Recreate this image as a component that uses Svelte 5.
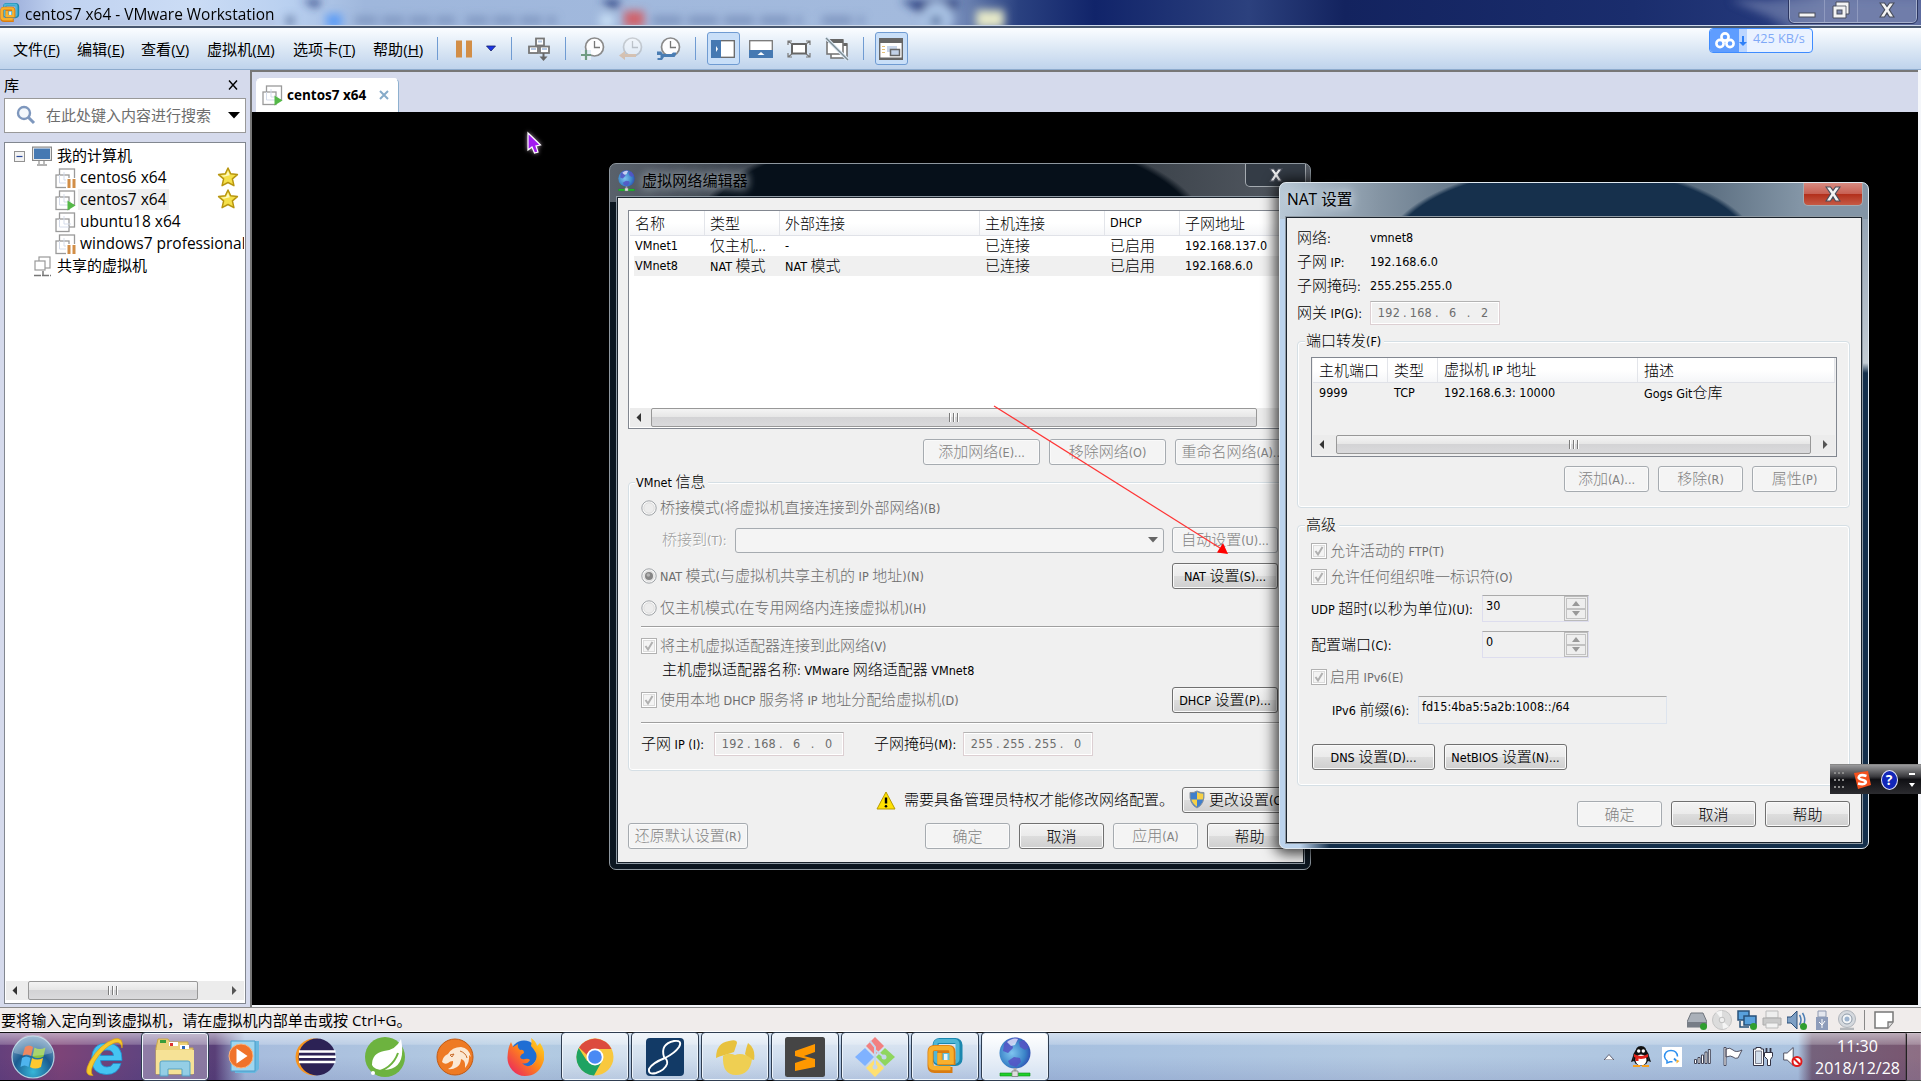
<script>
  // Splits a caption into CJK and Latin runs so each can use its own face and size.
  const runs = (t) => t.match(/[\u3000-\u9fff]+|[^\u3000-\u9fff]+/g) ?? [];
  const isCjk = (s) => /^[\u3000-\u9fff]/.test(s);

  const menus = [
    { t: '文件', k: 'F', w: 64 },
    { t: '编辑', k: 'E', w: 64 },
    { t: '查看', k: 'V', w: 66 },
    { t: '虚拟机', k: 'M', w: 86 },
    { t: '选项卡', k: 'T', w: 80 },
    { t: '帮助', k: 'H', w: 64 }
  ];
  const machines = [
    { name: 'centos6 x64', state: 'pause', star: true },
    { name: 'centos7 x64', state: 'play', star: true, selected: true },
    { name: 'ubuntu18 x64', state: 'off' },
    { name: 'windows7 professional', state: 'pause' }
  ];
  const nets = [
    ['名称', '类型', '外部连接', '主机连接', 'DHCP', '子网地址'],
    ['VMnet1', '仅主机...', '-', '已连接', '已启用', '192.168.137.0'],
    ['VMnet8', 'NAT 模式', 'NAT 模式', '已连接', '已启用', '192.168.6.0']
  ];
  const tasks = ['start', 'ie', 'folder', 'wmp', 'eclipse', 'spring', 'cheetah', 'firefox', 'chrome', 'eight', 'navi', 'sublime', 'git', 'vmware', 'globe'];
  const framed = ['folder', 'chrome', 'eight', 'navi', 'sublime', 'git', 'vmware', 'globe'];
</script>

{#snippet mix(t)}<span class="mix">{#each runs(t) as r}<span class:cjk={isCjk(r)}>{r}</span>{/each}</span>{/snippet}

{#snippet btn(t, cls)}<button class="btn {cls}">{@render mix(t)}</button>{/snippet}

{#snippet check(t)}
  <label class="opt"><svg width="16" height="16" viewBox="0 0 16 16"><rect x=".5" y=".5" width="15" height="15" fill="#fff" stroke="#b1b1b1"/><rect x="2.5" y="2.5" width="11" height="11" fill="#f4f4f4" stroke="#dcdcdc"/><path d="M4.5 8 L7 11.5 L11.5 4" fill="none" stroke="#b0b0b0" stroke-width="2"/></svg>{@render mix(t)}</label>
{/snippet}

{#snippet radio(t, on)}
  <label class="opt"><svg width="16" height="16" viewBox="0 0 16 16"><circle cx="8" cy="8" r="7.2" fill="#f7f7f7" stroke="#a0a4a8"/><circle cx="8" cy="8" r="5.2" fill="#ececec" stroke="#dedede"/>{#if on}<circle cx="8" cy="8" r="4" fill="#858585"/><circle cx="7.3" cy="7" r="1.8" fill="#b4b4b4"/>{/if}</svg>{@render mix(t)}</label>
{/snippet}

{#snippet hscroll(cls)}
  <div class="hs {cls}">
    <svg width="19" height="19" viewBox="0 0 19 19"><path d="M12 5v9L7.500 9.500z" fill="#333"/></svg>
    <div class="thumb"><i></i><i></i><i></i></div>
    <svg class="end" width="19" height="19" viewBox="0 0 19 19"><path d="M8 5v9l4.500-4.500z" fill="#555"/></svg>
  </div>
{/snippet}

{#snippet vm(state)}
  <svg width="21" height="21" viewBox="0 0 21 21"><rect x="4.500" y="1" width="15" height="14" fill="#fff" stroke="#9a9a9a" stroke-width="1.300"/><rect x="1" y="7" width="13" height="12.500" fill="#fff" stroke="#9a9a9a" stroke-width="1.300"/><path d="M4.500 7v8H14M9 4v8h7" fill="none" stroke="#d5dcea"/>
    {#if state === 'pause'}<path d="M11 10h10v11H11z" fill="#fff"/><path d="M12.500 11h3v9h-3zM17.500 11h3v9h-3z" fill="#d28e47"/>{/if}
    {#if state === 'play'}<path d="M12.500 10.500v10l8-5z" fill="#55b948"/>{/if}
  </svg>
{/snippet}

{#snippet star()}
  <svg class="star" width="22" height="20" viewBox="0 0 22 20"><path d="M11 1l2.700 5.800 6.700.8-5 4.300 1.500 6.800L11 15.500l-5.900 3.200 1.500-6.800-5-4.300 6.700-.8z" fill="#f5e04a" stroke="#b8960f" stroke-width="1.500" stroke-linejoin="round"/><path d="M11 4l1.800 4.200-6 1.500L4 8.800l5-.8z" fill="#fdf9c0"/></svg>
{/snippet}

{#snippet clock(kind)}
  <svg width="38" height="26" viewBox="0 0 38 26"><g opacity={kind === 'back' ? 0.35 : 1}>
    <circle cx="20.500" cy="11" r="9" fill="#fdfdfe" stroke="#8a8a8a" stroke-width="1.700"/><path d="M20.500 5v6.500H26" fill="none" stroke="#777" stroke-width="1.300"/>
    {#if kind === 'add'}<path d="M7 14h10v10H7z" fill="#e3ecf6"/><path d="M12 14v10M7 19h10" stroke="#6f9b83" stroke-width="2.200"/>{/if}
    {#if kind === 'back'}<path d="M7 19.500l6-4.500v3h11v3H13v3z" fill="#d8873d"/>{/if}
    {#if kind === 'wrench'}<path d="M7 15.500h4l2 2.500h8.500l1.500-1.500h3v2l-1.500 2.500H14l-2 3H7.500v-2h3v-3H7z" fill="#4a7db3"/>{/if}
  </g></svg>
{/snippet}

{#snippet globe(s)}
  <svg width={s} height={s * 1.25} viewBox="0 0 32 40"><defs><radialGradient id="gl{s}" cx=".4" cy=".5" r=".7"><stop offset="0" stop-color="#7fc4f0"/><stop offset=".6" stop-color="#3b84c8"/><stop offset="1" stop-color="#2a35a8"/></radialGradient></defs><circle cx="16" cy="16" r="15.500" fill="url(#gl{s})"/><path d="M5 7C8 2 15 0 20 1l-2 4-5 2 1 4-5 5-5-2zM20 5l5-2 5 7-4 3-5-3zM15 20l6 1 1 4-5 5-6-2-2-4z" fill="#5552c4" opacity=".85"/><path d="M8 5q6-5 11-3l-3 6-4 1z" fill="#eef4ff" opacity=".75"/><path d="M14.500 31h3v4h-3z" fill="#aaa"/><path d="M1 36h30v3H1z" fill="#1fd02a" stroke="#0b8a14" stroke-width=".6"/><path d="M13 34h6v5.500h-6z" fill="#ddd" stroke="#777" stroke-width=".7"/></svg>
{/snippet}

{#snippet vmlogo(s)}
  <svg width={s} height={s} viewBox="0 0 36 37"><rect x="8" y="3" width="24" height="22" rx="4" fill="none" stroke="#1b87ae" stroke-width="6"/><rect x="8" y="3" width="22" height="21" rx="3" fill="none" stroke="#4fb6d6" stroke-width="4"/><path d="M25 32H7q-4 0-4-4V14q0-4 4-4h14q4 0 4 4v10H13v-8h6v4" fill="none" stroke="#d97c12" stroke-width="6"/><path d="M23 30H7q-4 0-4-4V14q0-4 4-4h14q3 0 3 4v10H12v-9" fill="none" stroke="#f8b02d" stroke-width="4.500"/><path d="M15 15h7v7h-7z" fill="#5fc0dc"/><path d="M16.500 16h3.500v6h-3.500z" fill="#e9f4fa"/></svg>
{/snippet}

{#snippet capX(w)}
  <svg width={w} height="16" viewBox="0 0 16 16"><path d="M1 1h4.500L8 4.500 10.500 1H15l-4.700 6.700L15 15h-4.500L8 11l-2.500 4H1l4.700-7.300z" fill="#f4f4f4" stroke="#4a4f5c" stroke-width="1.200"/></svg>
{/snippet}

<div class="screen">
  <header class="titlebar">
    <svg class="blur" width="1921" height="26" viewBox="0 0 1921 26">
      <defs>
        <filter id="soft" x="-10%" y="-60%" width="120%" height="220%"><feGaussianBlur stdDeviation="4"/></filter>
        <linearGradient id="sky" x1="0" x2="1"><stop offset="0" stop-color="#96a8d6"/><stop offset=".03" stop-color="#c0d2f0"/><stop offset=".1" stop-color="#cbdcf5"/><stop offset=".15" stop-color="#b9d0f0"/><stop offset=".19" stop-color="#9fb7dc"/><stop offset=".48" stop-color="#a3badd"/><stop offset=".53" stop-color="#2a4180"/><stop offset=".57" stop-color="#11246a"/><stop offset=".65" stop-color="#2c417e"/><stop offset=".7" stop-color="#13235f"/><stop offset=".85" stop-color="#1a2d6d"/><stop offset=".92" stop-color="#24387a"/><stop offset=".95" stop-color="#5f6f9f"/><stop offset="1" stop-color="#56649a"/></linearGradient>
      </defs>
      <rect width="1921" height="26" fill="url(#sky)"/>
      <g filter="url(#soft)">
        <path d="M302 0h20l-6 8zM600 0h22l-8 10zM900 0h60l-8 14-30 0z" fill="#2c3f80"/>
        <rect x="326" y="14" width="16" height="14" fill="#5f9df5"/><path d="M355 20.500h100M466 20.500h90" stroke="#7f96c0" stroke-width="8" stroke-dasharray="22 5"/>
        <rect x="624" y="11" width="20" height="16" fill="#d0626a"/><path d="M652 20.500h150M822 20.500h42" stroke="#7f96c0" stroke-width="9" stroke-dasharray="30 6"/>
        <rect x="600" y="14" width="14" height="14" fill="#c5dcf3"/><rect x="976" y="10" width="28" height="18" fill="#e5e8c8"/><circle cx="937" cy="18" r="16" fill="#a9c2e4"/><rect x="931" y="16" width="10" height="10" fill="#5f79a5"/>
        <rect x="28" y="20" width="250" height="5" fill="#aab8d8"/><rect x="286" y="16" width="8" height="10" fill="#6d83ab"/>
        <path d="M1730 0L1800 30H1921V0z" fill="#6877a5" opacity=".8"/>
      </g>
    </svg>
    <span class="applogo">{@render vmlogo(20)}</span>
    <h1>centos7 x64 - VMware Workstation</h1>
    <div class="caps">
      <span class="c1"><svg width="18" height="16" viewBox="0 0 18 16"><rect x="1" y="11" width="16" height="4" fill="#f4f4f4" stroke="#4a4f5c"/></svg></span>
      <span class="c2"><svg width="20" height="18" viewBox="0 0 20 18"><path d="M5 1h13v12h-3v4H2V5h3z" fill="#f4f4f4" stroke="#4a4f5c"/><path d="M5 5h10v8" fill="none" stroke="#4a4f5c" stroke-width=".8"/><rect x="6" y="9" width="5" height="4" fill="#7d88ad" stroke="#4a4f5c"/></svg></span>
      <span class="c3">{@render capX(16)}</span>
    </div>
  </header>

  <nav class="menubar">
    {#each menus as m}<span class="menu" style:width="{m.w}px">{m.t}(<u>{m.k}</u>)</span>{/each}
    <i class="sep"></i>
    <svg width="73" height="26" viewBox="0 0 73 26"><path d="M18 4.500h6v17h-6zM28 4.500h6v17h-6z" fill="#d28e47"/><path d="M48.500 10h9l-4.500 5z" fill="#1a35e8" stroke="#15206b" stroke-width=".8"/></svg>
    <i class="sep"></i>
    <svg width="53" height="26" viewBox="0 0 53 26"><g fill="#fff" stroke="#777" stroke-width="1.800"><rect x="24" y="2.500" width="8" height="7"/><rect x="17" y="10.500" width="9" height="6.500"/><rect x="28" y="10.500" width="9" height="6.500"/></g><path d="M19 13h5M30 13h5M26 5.500h4" stroke="#b6c9e4" stroke-width="2"/><path d="M31.500 17v5" stroke="#666" stroke-width="2"/><path d="M27.500 20.500h8l-4 4.500z" fill="#666"/></svg>
    <i class="sep"></i>
    <div class="clocks">{@render clock('add')}{@render clock('back')}{@render clock('wrench')}</div>
    <i class="sep"></i>
    <div class="views">
      <span class="tool on"><svg width="24" height="18" viewBox="0 0 24 18"><rect x=".7" y=".7" width="22.600" height="16.600" fill="#fff" stroke="#666" stroke-width="1.300"/><path d="M0 0h10v18H0z" fill="#4679b2"/><path d="M5 6v6l2-3z" fill="#fff"/></svg></span>
      <span class="tool"><svg width="24" height="18" viewBox="0 0 24 18"><rect x=".7" y=".7" width="22.600" height="16.600" fill="#fff" stroke="#777" stroke-width="1.300"/><path d="M0 10h24v8H0z" fill="#4679b2"/><path d="M8.500 15h7L12 12z" fill="#fff"/></svg></span>
      <span class="tool"><svg width="24" height="20" viewBox="0 0 24 20"><rect x="5" y="5" width="14" height="9.500" fill="#fff" stroke="#666" stroke-width="2"/><path d="M1 6V2h4M1 2l4 3M19 2h4v4M23 2l-4 3M1 14v4h4M1 18l4-3M19 18h4v-4M23 18l-4-3" fill="none" stroke="#777" stroke-width="1.200"/></svg></span>
      <span class="tool"><svg width="24" height="24" viewBox="0 0 24 24"><rect x="6" y="7" width="16" height="14" fill="#fff" stroke="#777" stroke-width="1.600"/><path d="M7 7.500h15" stroke="#666" stroke-width="3"/><rect x="2" y="3" width="16" height="14" fill="#fff" stroke="#777" stroke-width="1.600"/><path d="M2 4h16" stroke="#666" stroke-width="4"/><path d="M1 1l22 22" stroke="#dde8f5" stroke-width="3.500"/><path d="M1 1l22 22" stroke="#7a8a90" stroke-width="1.500"/></svg></span>
    </div>
    <i class="sep"></i>
    <div class="views"><span class="tool on"><svg width="24" height="22" viewBox="0 0 24 22"><path d="M.7.700h22.600v20.600H.7z" fill="#fff" stroke="#666" stroke-width="1.400"/><path d="M0 0h24v5H0zM0 19.500h24V22H0z" fill="#666"/><path d="M3 8.500h3M3 11.500h3M3 14.500h3" stroke="#e4c07a"/><rect x="8" y="8" width="10" height="6" fill="#c9d6ea"/><rect x="11.500" y="11.500" width="9" height="6" fill="#c2d1e6" stroke="#666" stroke-width="1.500"/></svg></span></div>
    <div class="speed">
      <span class="cloud"><svg width="20" height="17" viewBox="0 0 20 17"><g fill="none" stroke="#fff" stroke-width="2.600"><circle cx="5" cy="11.500" r="3.600"/><circle cx="15" cy="11.500" r="3.600"/><circle cx="10" cy="5" r="3.600"/></g></svg></span>
      <span class="strip"><svg width="8" height="12" viewBox="0 0 8 12"><path d="M3 1h2v6h3l-4 4-4-4h3z" fill="#2f80f7"/></svg></span>
      <span class="rate">425 KB/s</span>
    </div>
  </nav>

  <main>
    <aside>
      <div class="libhead"><span>库</span><svg width="10" height="10" viewBox="0 0 10 10"><path d="M1 .5l8 9M9 .5l-8 9" stroke="#000" stroke-width="1.400"/></svg></div>
      <div class="search">
        <svg width="20" height="20" viewBox="0 0 20 20"><circle cx="8" cy="8" r="6" fill="#f4f8fc" stroke="#7e97bd" stroke-width="2.400"/><path d="M12.500 12.500l5.500 5.500" stroke="#7e97bd" stroke-width="3"/></svg>
        <span>在此处键入内容进行搜索</span>
        <svg width="12" height="7" viewBox="0 0 12 7"><path d="M0 0h12L6 6.500z" fill="#000"/></svg>
      </div>
      <div class="tree">
        <div class="node root"><svg width="11" height="11" viewBox="0 0 11 11"><rect x=".5" y=".5" width="10" height="10" fill="#f3f3f3" stroke="#919191"/><path d="M2.500 5.500h6" stroke="#2b4a9b" stroke-width="1.200"/></svg><svg class="pc" width="20" height="20" viewBox="0 0 20 20"><rect x=".6" y="1.100" width="18.800" height="13.300" fill="#fff" stroke="#888" stroke-width="1.200"/><rect x="2" y="2.500" width="16" height="10.500" fill="#4679b2"/><path d="M7 15v3M12 15v3M5 19h10" stroke="#999" stroke-width="1.300"/></svg><span>我的计算机</span></div>
        {#each machines as m}
          <div class="node vmrow">{@render vm(m.state)}<span class="nm" class:sel={m.selected}>{m.name}</span>{#if m.star}{@render star()}{/if}</div>
        {/each}
        <div class="node shared"><svg width="19" height="21" viewBox="0 0 19 21"><rect x="5" y="1" width="11" height="11" fill="#fff" stroke="#999" stroke-width="1.200"/><rect x="1" y="5" width="10" height="9" fill="#fff" stroke="#999" stroke-width="1.200"/><path d="M9 15v4M0 19.500h17" stroke="#777" stroke-width="1.500" stroke-dasharray="7 1"/></svg><span>共享的虚拟机</span></div>
        {@render hscroll('side')}
      </div>
    </aside>
    <section class="work">
      <div class="tabs"><div class="tab">{@render vm('play')}<b>centos7 x64</b><svg width="10" height="10" viewBox="0 0 10 10"><path d="M1 1l8 8M9 1l-8 8" stroke="#86abc9" stroke-width="2"/></svg></div></div>
      <div class="console"></div>
    </section>
  </main>

  <footer class="status">
    <span>要将输入定向到该虚拟机，请在虚拟机内部单击或按 Ctrl+G。</span>
    <div class="devs">
      <svg width="20" height="20" viewBox="0 0 20 20"><path d="M4 3h12l4 9v5H0v-5z" fill="#aab0b9" stroke="#6f747c"/><path d="M0 12h20v5H0z" fill="#777d86"/><circle cx="16.500" cy="16.500" r="3.500" fill="#2f9e2f"/></svg>
      <svg width="20" height="20" viewBox="0 0 20 20"><circle cx="10" cy="10" r="9.500" fill="#dcdcdc" stroke="#c4c4c4"/><path d="M10 10L4 2l6-1.500zM10 10l7 7-6 2z" fill="#f5f5f5"/><circle cx="10" cy="10" r="2.800" fill="#eee" stroke="#c0c0c0"/></svg>
      <svg width="20" height="20" viewBox="0 0 20 20"><rect x="1" y="1" width="11" height="9" fill="#58a0dc" stroke="#27507a" stroke-width="1.500"/><rect x="7" y="6" width="12" height="9" fill="#58a0dc" stroke="#27507a" stroke-width="1.500"/><path d="M3 11v6h9" fill="none" stroke="#27507a" stroke-width="1.500"/><circle cx="16.500" cy="16.500" r="3.500" fill="#2f9e2f"/></svg>
      <svg width="20" height="20" viewBox="0 0 20 20"><path d="M4 1h12v7H4z" fill="#eee" stroke="#bbb"/><path d="M1 8h18v7H1z" fill="#c9c9c9" stroke="#aaa"/><path d="M4 13h12v5H4z" fill="#f2f2f2" stroke="#bbb"/></svg>
      <svg width="20" height="20" viewBox="0 0 20 20"><path d="M0 7h4l6-6v18l-6-6H0z" fill="#7d9fc4" stroke="#2c4f78"/><path d="M12.500 5q3 5 0 10M15.500 3q4.500 7 0 14" fill="none" stroke="#4a7db3" stroke-width="1.500"/><circle cx="16.500" cy="16.500" r="3.500" fill="#2f9e2f"/></svg>
      <svg width="20" height="20" viewBox="0 0 20 20"><path d="M6 1h8v6H6z" fill="#e4e7ee" stroke="#8d98b0"/><path d="M4 7h12v13H4z" fill="#8d9cba"/><path d="M10 9v9M7 12l3 3 3-4" fill="none" stroke="#fff"/></svg>
      <svg width="20" height="20" viewBox="0 0 20 20"><circle cx="10" cy="9" r="8.500" fill="#d5d9de" stroke="#aeb3ba"/><circle cx="10" cy="9" r="5" fill="#f4f6f8" stroke="#8e9aa8"/><circle cx="10" cy="9" r="2.500" fill="#9db4cf"/><path d="M3 19h14" stroke="#b5b8bc" stroke-width="2.500"/></svg>
      <i></i>
      <svg class="note" width="20" height="18" viewBox="0 0 20 18"><path d="M1 1h18v10l-5 6H1z" fill="#fff" stroke="#777" stroke-width="1.500"/><path d="M14 17v-6h5" fill="#ddd" stroke="#777" stroke-width="1.300"/></svg>
    </div>
  </footer>

  <div class="taskbar">
    {#each tasks as t}
      <div class="task" class:first={t === 'start'} class:framed={framed.includes(t)} class:dim={t === 'folder'} class:active={t === 'globe'}>
        {#if t === 'start'}
          <svg width="44" height="44" viewBox="0 0 44 44"><defs><radialGradient id="orb" cx=".5" cy=".85" r=".9"><stop offset="0" stop-color="#37b6d8"/><stop offset=".5" stop-color="#1b5c91"/><stop offset="1" stop-color="#92b2cf"/></radialGradient></defs><circle cx="22" cy="22" r="21" fill="url(#orb)" stroke="#b5d5e4" stroke-width="1.200"/><path d="M14 12q4-3 8 0l-2 9q-4-3-8.500 0z" fill="#e8602c"/><path d="M23.500 12.500q5 3 11 0l-2 9q-6 3-11 0z" fill="#8cc63f"/><path d="M11 23q4-3 8.500 0l-2 9q-4-3-8 0z" fill="#4fb4ee"/><path d="M21 23q5 3 11 0l-2 9q-6 3-11 0z" fill="#fdc82f"/><path d="M3 18a19 19 0 0 1 38 0q-19 6-38 0z" fill="#fff" opacity=".25"/></svg>
        {:else if t === 'ie'}
          <svg width="38" height="40" viewBox="0 0 38 40"><path fill-rule="evenodd" d="M36 23.500H14.500q.5 6.500 6.500 6.500 4.500 0 6-3.500h8Q32 37.500 20.500 37.500 5.500 37 5.500 22 6 6 21 6q15.500.5 15 17.500zM14.500 18.500h13q-.5-5.500-6.500-5.500t-6.500 5.500z" fill="#45c4f2" stroke="#1e8fd0" stroke-width=".8"/><path d="M7 38.500Q-4 39 4 24 14 7 28 2q10-2.500 8 9-1-7.500-8-5Q17 11 9 24 3 35 7 38.500z" fill="#f7c92c" stroke="#d99e10" stroke-width=".7"/></svg>
        {:else if t === 'folder'}
          <svg width="40" height="40" viewBox="0 0 40 40"><path d="M3 2h10l2 3h18v6h5v26H1V11z" fill="#ecd27a" stroke="#c9a94b"/><path d="M5 3h6v3H5z" fill="#3a9c3a"/><path d="M14 5h9v4h-9z" fill="#fff"/><path d="M15 6h3v3h-3z" fill="#d33"/><path d="M25 8h9v4h-9z" fill="#fff"/><path d="M27 9h3v3h-3z" fill="#2b66b8"/><path d="M1 13h38v24H1z" fill="#f6e296"/><path d="M5 26q0-2 2-2h26q2 0 2 2v13h-8v-7H13v7H5z" fill="#8fcdea" stroke="#4f9fc6" opacity=".95"/></svg>
        {:else if t === 'wmp'}
          <svg width="36" height="36" viewBox="0 0 36 36"><path d="M8 2h24v28l-4 4H8z" fill="#69b9e0"/><path d="M4 2h24v30H4z" fill="#9fd6ef" stroke="#4a9cc8"/><circle cx="14" cy="17" r="12" fill="#f0732a" stroke="#fbb27c"/><path d="M9.500 9.500v15l11-7.500z" fill="#fff"/></svg>
        {:else if t === 'eclipse'}
          <svg width="42" height="40" viewBox="0 0 42 40"><circle cx="20" cy="20" r="18.500" fill="#f7941e"/><circle cx="23" cy="20" r="18.500" fill="#2c2255"/><path d="M5 14.500h36.500M5 19.800h37M5 25h36.500" stroke="#fff" stroke-width="2.400"/></svg>
        {:else if t === 'spring'}
          <svg width="42" height="42" viewBox="0 0 42 42"><circle cx="21" cy="21" r="20" fill="#6db33f"/><path d="M37 3q6 30-17 31-10 0-12-5 0-12 12-14 12-1 17-12z" fill="#fff"/><path d="M8 37q20-3 26-20" stroke="#6db33f" stroke-width="2" fill="none"/><circle cx="9" cy="37" r="2" fill="#fff"/></svg>
        {:else if t === 'cheetah'}
          <svg width="38" height="38" viewBox="0 0 38 38"><circle cx="19" cy="19" r="18" fill="#ee7a24" stroke="#c25a12"/><path d="M6 24q1-6 6-8 4-7 13-7 8 1 10 10l-2-2q1 7-4 13 1-8-4-9 0 5-4 8-5 3-9 2 6-3 5-8-3 0-5 2-3 2-6-1z" fill="#fbe8d4"/><path d="M14 17l4-1-2 3zM24 13q6 2 7 7" stroke="#c86a28" fill="none"/></svg>
        {:else if t === 'firefox'}
          <svg width="38" height="40" viewBox="0 0 38 40"><defs><linearGradient id="ff" x1="1" x2="0" y2="1"><stop offset="0" stop-color="#ffe226"/><stop offset=".45" stop-color="#ff8a16"/><stop offset="1" stop-color="#e8166b"/></linearGradient></defs><circle cx="18" cy="17" r="13.500" fill="#1f6ed4"/><path d="M19 39A18 18 0 0 1 1.500 20Q2 10 5 5l2 5 5-3q-1 4 2 6 4-1 4 3-3 1-4 4 1 3 5 2 3-1 5 1-3 5-8 3 4 5 10 2 6-5 4-12-3-5-5-7 1-5 0-8 5 3 6 8l3-3q7 10 3 20-5 13-18 13z" fill="url(#ff)"/></svg>
        {:else if t === 'chrome'}
          <svg width="38" height="38" viewBox="0 0 38 38"><circle cx="19" cy="19" r="18.500" fill="#f8c83e"/><path d="M2.700 10A18.500 18.500 0 0 0 18 37.500L26 23 11 23z" fill="#1ea362"/><path d="M3 9.500q5-8 16-9 12 1 16.500 10.500H19q-6 0-8 6z" fill="#dc4b3e"/><circle cx="19" cy="19" r="8.500" fill="#fff"/><circle cx="19" cy="19" r="6.800" fill="#4a8af4"/></svg>
        {:else if t === 'eight'}
          <svg width="40" height="40" viewBox="0 0 40 40"><rect x="1" y="1" width="38" height="38" rx="4" fill="#123a66"/><path d="M19 20Q15 7 29 4q9-1 5 6-4 6-14 11Q7 26 4 32q-1 6 7 4 9-3 11-9 1-4-3-7z" fill="none" stroke="#fff" stroke-width="1.900"/></svg>
        {:else if t === 'navi'}
          <svg width="40" height="38" viewBox="0 0 40 38"><path d="M1 20Q1 5 14 3q8-2 8 2l-3 9-9 3q-5 1-9 3z" fill="#e8c23e"/><path d="M33 5q8 6 6 17-6-1-9-6 1-6 3-11z" fill="#e8c23e"/><path d="M8 18q5-4 12-1 8-3 17 4-2 16-16 16Q7 37 8 18z" fill="#efcf52"/></svg>
        {:else if t === 'sublime'}
          <svg width="40" height="40" viewBox="0 0 40 40"><rect width="40" height="40" rx="2.500" fill="#454545"/><path d="M10 14l20-7v8l-11 4 11 3v8l-20 4v-8l12-4-12-3z" fill="#ff9800"/></svg>
        {:else if t === 'git'}
          <svg width="40" height="40" viewBox="0 0 40 40"><path d="M20 0l9 9-9 9-9-9z" fill="#f28080"/><path d="M10 11l9 9-9 9-10-9z" fill="#7fb2ff"/><path d="M30 11l10 9-10 9-9-9z" fill="#8fd65f"/><path d="M20 22l9 9-9 9-9-9z" fill="#ffe070"/><path d="M15 4l5 6v20M20 13l9 7" stroke="#c5d6ea" stroke-width="2" fill="none"/><circle cx="20" cy="30" r="2.500" fill="#c5d6ea"/><circle cx="29" cy="20" r="2.500" fill="#c5d6ea"/></svg>
        {:else if t === 'vmware'}
          {@render vmlogo(37)}
        {:else}
          {@render globe(32)}
        {/if}
      </div>
    {/each}
    <div class="tray">
      <svg class="up" width="10" height="6" viewBox="0 0 10 6"><path d="M0 6h10L5 .500z" fill="#fff" stroke="#556" stroke-width=".9"/></svg>
      <svg class="qq" width="20" height="21" viewBox="0 0 20 21"><ellipse cx="10" cy="11" rx="8" ry="9" fill="#111"/><path d="M10 0q6 0 5.500 8h-11Q4 0 10 0zM2 10l-2 6 3-1zM18 10l2 6-3-1z" fill="#111"/><ellipse cx="10" cy="14" rx="5.500" ry="5.500" fill="#fff"/><path d="M3 8q7 4 14 0v3q-7 4-14 0z" fill="#e2231a"/><path d="M4.500 11h3v4h-3z" fill="#e2231a"/><circle cx="7.700" cy="5" r="1.700" fill="#fff"/><circle cx="12.300" cy="5" r="1.700" fill="#fff"/><path d="M2 19h7v2H2zM11 19h7v2h-7z" fill="#f9a01b"/></svg>
      <svg class="chat" width="20" height="20" viewBox="0 0 20 20"><rect width="20" height="20" fill="#fff"/><path d="M15.500 9.500Q15 3.500 9 3.500T2.500 9.500q.5 3 2.500 4.200V16l3-1.200h2.500" fill="none" stroke="#2b8ff0" stroke-width="1.500"/><path d="M12 11.500l2.500 2.500" stroke="#2b8ff0" stroke-width="1.800"/><path d="M14.500 12.500l3 1.500-3 2.500z" fill="#f9b233"/></svg>
      <svg class="sig" width="17" height="15" viewBox="0 0 17 15"><g fill="#fff" stroke="#334" stroke-width=".9"><path d="M.5 10.500h2v4h-2zM4 8.500h2v6H4zM7.500 6h2v8.500h-2zM11 3h2v11.500h-2zM14.300.500h2v14h-2z"/></g></svg>
      <svg class="flag" width="20" height="19" viewBox="0 0 20 19"><path d="M1 .5h2v18H1zM3 2q4-2 7 1t9 0l-4 8q-3 1-5-1t-7 0z" fill="#fff" stroke="#445" stroke-width=".9"/></svg>
      <svg class="bat" width="20" height="19" viewBox="0 0 20 19"><path d="M3 .5h5V2h2.500v16.500H.5V2H3z" fill="#fff" stroke="#334" stroke-width="1"/><path d="M2.500 4h6v12.500h-6z" fill="#d3dfec" stroke="#556" stroke-width=".7"/><path d="M13.500 1v5M17.500 1v5" stroke="#334" stroke-width="1.800"/><path d="M11.500 5.500h8v4l-2 3v6h-3v-6l-3-3z" fill="#fff" stroke="#334"/></svg>
      <svg class="spk" width="20" height="20" viewBox="0 0 20 20"><path d="M.7 6h3.500l6-5.500v18l-6-5.500H.7z" fill="#fff" stroke="#445" stroke-width=".9"/><circle cx="14" cy="14.500" r="4.500" fill="#fff" stroke="#e01b1b" stroke-width="2"/><path d="M11 11.500l6 6" stroke="#e01b1b" stroke-width="2"/></svg>
      <div class="time"><span>11:30</span><span>2018/12/28</span></div>
      <i class="peek"></i>
    </div>
  </div>

  <div class="win net">
    <div class="bar"><span class="ico">{@render globe(17)}</span><span class="cap">虚拟网络编辑器</span></div>
    <div class="close plain">{@render capX(14)}</div>
    <div class="client">
      <div class="list">
        {#each nets as row, i}
          <div class="tr" class:th={i === 0} class:picked={i === 2}>{#each row as c}<span class="td">{@render mix(c)}</span>{/each}</div>
        {/each}
        {@render hscroll('wide')}
      </div>
      <div class="row netbtns">{@render btn('添加网络(E)...', 'off w117')}{@render btn('移除网络(O)', 'off w117')}{@render btn('重命名网络(A)...', 'off w115')}</div>
      <div class="group g1">
        <div class="legend">{@render mix('VMnet 信息')}</div>
        <div class="row r34">{@render radio('桥接模式(将虚拟机直接连接到外部网络)(B)', false)}</div>
        <div class="row r30"><span class="bridge">{@render mix('桥接到(T):')}</span><div class="combo"><svg width="10" height="6" viewBox="0 0 10 6"><path d="M0 0h10L5 5.500z" fill="#666"/></svg></div><span class="grow"></span>{@render btn('自动设置(U)...', 'off w106')}</div>
        <div class="row r42">{@render radio('NAT 模式(与虚拟机共享主机的 IP 地址)(N)', true)}<span class="grow"></span>{@render btn('NAT 设置(S)...', 'w106')}</div>
        <div class="row r22">{@render radio('仅主机模式(在专用网络内连接虚拟机)(H)', false)}</div>
        <hr class="h1" />
        <div class="row ck1">{@render check('将主机虚拟适配器连接到此网络(V)')}</div>
        <div class="row hostname">{@render mix('主机虚拟适配器名称: VMware 网络适配器 VMnet8')}</div>
        <div class="row r34">{@render check('使用本地 DHCP 服务将 IP 地址分配给虚拟机(D)')}<span class="grow"></span>{@render btn('DHCP 设置(P)...', 'w106')}</div>
        <hr class="h2" />
        <div class="row r42 subnet"><span class="l1">{@render mix('子网 IP (I):')}</span><div class="ip"><b>192</b>.<b>168</b>.<b>6</b>.<b>0</b></div><span class="l2">{@render mix('子网掩码(M):')}</span><div class="ip"><b>255</b>.<b>255</b>.<b>255</b>.<b>0</b></div></div>
      </div>
      <div class="row warn">
        <svg width="20" height="19" viewBox="0 0 20 19"><path d="M10 1l9 17H1z" fill="#ffe100" stroke="#b89b00" stroke-linejoin="round"/><path d="M10 6.500v6" stroke="#000" stroke-width="2.400"/><circle cx="10" cy="15.300" r="1.300"/></svg>
        <span class="wt">{@render mix('需要具备管理员特权才能修改网络配置。')}</span>
        <button class="btn admin"><svg width="16" height="19" viewBox="0 0 16 19"><path d="M8 1q4 2 7 1.500Q16 14 8 18 0 14 1 2.500 5 3 8 1z" fill="#3f7fcc" stroke="#8a929c"/><path d="M8 2q3.500 1.700 6.300 1.500.3 3.500-.5 6H8zM8 9.500v7.300Q3.700 14 2.300 9.500z" fill="#f7d046"/></svg>{@render mix('更改设置(C)')}</button>
      </div>
      <div class="row foot">{@render btn('还原默认设置(R)', 'off w120')}<span class="grow"></span>{@render btn('确定', 'off w85')}{@render btn('取消', 'w85')}{@render btn('应用(A)', 'off w85')}{@render btn('帮助', 'w85')}</div>
    </div>
  </div>

  <div class="win nat">
    <div class="bar"><span class="cap">NAT 设置</span></div>
    <div class="close red">{@render capX(16)}</div>
    <div class="client">
      <div class="row f24"><span class="lab">{@render mix('网络:')}</span>{@render mix('vmnet8')}</div>
      <div class="row f24"><span class="lab">{@render mix('子网 IP:')}</span>{@render mix('192.168.6.0')}</div>
      <div class="row f24"><span class="lab">{@render mix('子网掩码:')}</span>{@render mix('255.255.255.0')}</div>
      <div class="row f30"><span class="lab">{@render mix('网关 IP(G):')}</span><div class="ip"><b>192</b>.<b>168</b>.<b>6</b>.<b>2</b></div></div>
      <div class="group g2">
        <div class="legend">{@render mix('端口转发(F)')}</div>
        <div class="ports">
          <div class="tr th"><span class="td">{@render mix('主机端口')}</span><span class="td">{@render mix('类型')}</span><span class="td">{@render mix('虚拟机 IP 地址')}</span><span class="td">{@render mix('描述')}</span></div>
          <div class="tr"><span class="td">{@render mix('9999')}</span><span class="td">{@render mix('TCP')}</span><span class="td">{@render mix('192.168.6.3: 10000')}</span><span class="td">{@render mix('Gogs Git仓库')}</span></div>
          {@render hscroll('mid')}
        </div>
        <div class="row pbtns">{@render btn('添加(A)...', 'off w85')}{@render btn('移除(R)', 'off w85')}{@render btn('属性(P)', 'off w85')}</div>
      </div>
      <div class="group g3">
        <div class="legend">{@render mix('高级')}</div>
        <div class="row r26 lead">{@render check('允许活动的 FTP(T)')}</div>
        <div class="row r26">{@render check('允许任何组织唯一标识符(O)')}</div>
        <div class="row r37"><span class="sl">{@render mix('UDP 超时(以秒为单位)(U):')}</span><div class="spin"><span>{@render mix('30')}</span><div class="ud"><i><svg width="8" height="5"><path d="M0 5h8L4 0z" fill="#999"/></svg></i><i><svg width="8" height="5"><path d="M0 0h8L4 5z" fill="#999"/></svg></i></div></div></div>
        <div class="row r35"><span class="sl">{@render mix('配置端口(C):')}</span><div class="spin"><span>{@render mix('0')}</span><div class="ud"><i><svg width="8" height="5"><path d="M0 5h8L4 0z" fill="#999"/></svg></i><i><svg width="8" height="5"><path d="M0 0h8L4 5z" fill="#999"/></svg></i></div></div></div>
        <div class="row r30">{@render check('启用 IPv6(E)')}</div>
        <div class="row r35"><span class="pl">{@render mix('IPv6 前缀(6):')}</span><div class="prefix">{@render mix('fd15:4ba5:5a2b:1008::/64')}</div></div>
        <div class="row setbtns">{@render btn('DNS 设置(D)...', 'w123')}{@render btn('NetBIOS 设置(N)...', 'w123')}</div>
      </div>
      <div class="row nfoot">{@render btn('确定', 'off w85')}{@render btn('取消', 'w85')}{@render btn('帮助', 'w85')}</div>
    </div>
  </div>

  <svg class="arrow" width="240" height="155" viewBox="0 0 240 155"><path d="M1 1L227 143" stroke="#f33" stroke-width="1.200"/><path d="M235 149l-11-1.500 6-9.500z" fill="#f00"/></svg>

  <svg class="cursor" width="20" height="28" viewBox="0 0 20 28"><path d="M4 3v17l4-3 2.500 6 3.500-1-2-6 4.500-1z" fill="#a21cf0" stroke="#fff" stroke-width="1.200"/></svg>

  <div class="ime">
    <svg width="10" height="18" viewBox="0 0 10 18"><path d="M0 2h10M0 9h10M0 16h10" stroke="#8a8a8a" stroke-width="2" stroke-dasharray="2 2"/></svg>
    <svg width="20" height="20" viewBox="0 0 20 20"><path d="M2 3l14-2 3 14-13 4z" fill="#f4511e"/><path d="M14.500 6q-6-2-7.500.5T11 10q4 1 2.500 3T6 13.500" fill="none" stroke="#fff" stroke-width="2.600"/></svg>
    <span class="help">?</span>
    <svg width="6" height="16" viewBox="0 0 6 16"><path d="M0 1h6v2H0zM0 11h6l-3 4z" fill="#fff"/></svg>
  </div>
</div>

<style>
  :global(body) { margin: 0; background: #000; overflow: hidden; }
  .screen { position: relative; width: 1921px; height: 1081px; display: flex; flex-direction: column; overflow: hidden; background: #000; color: #000; font: 15.1px/20px 'Open Sans', 'Noto Sans CJK SC', sans-serif; white-space: nowrap; }
  svg { display: block; flex: none; }
  i { flex: none; font-style: normal; }

  .titlebar { position: relative; height: 28px; box-sizing: border-box; display: flex; align-items: flex-start; border-bottom: 2px solid #47566d; background: #cbdcf5; }
  .blur { position: absolute; left: 0; top: 0; }
  .titlebar::after { content: ''; position: absolute; left: 0; right: 0; top: 25px; height: 1px; background: #cdd8ea; }
  .applogo { position: relative; margin: 3px 5px 0 0; }
  h1 { position: relative; margin: 3px 0 0; font-size: 15.45px; line-height: 22px; font-weight: 400; }
  .caps { position: relative; display: flex; width: 128px; height: 23px; margin-left: auto; margin-right: 4px; box-sizing: border-box; border: 1px solid #a6b0cc; border-top: 0; border-radius: 0 0 5px 5px; outline: 1px solid #2b3560; background: rgba(255, 255, 255, .08); }
  .caps span { display: flex; align-items: center; justify-content: center; padding-bottom: 2px; border-right: 1px solid #8f9abf; }
  .c1 { width: 34px; } .c2 { width: 32px; } .c3 { flex: 1; border: 0 !important; }

  .menubar { position: relative; height: 42px; display: flex; align-items: center; padding-left: 13px; background: linear-gradient(#fbfdff, #dce8f5 50%, #bfd3ec); border-bottom: 1px solid #8eabcd; box-sizing: border-box; }
  .menu { flex: none; }
  .sep { width: 1px; height: 23px; background: #6f9bd2; }
  .clocks { display: flex; padding: 0 7px 0 8px; }
  .views { display: flex; padding: 0 7px 0 8px; }
  .tool { width: 38px; height: 33px; display: flex; align-items: center; justify-content: center; }
  .on { width: 31px; margin: 0 2.5px; border: 1px solid #6f9bd2; border-radius: 3px; background: #c9dff8; height: 31px; }
  .speed { position: absolute; left: 1709px; top: 0; width: 104px; height: 25px; box-sizing: border-box; display: flex; border: 1px solid #3f8cff; border-radius: 4px; overflow: hidden; background: #eaf2ff; color: #7fa9f7; }
  .cloud { width: 29px; background: #5f9dff; display: flex; align-items: center; justify-content: center; }
  .strip { width: 8px; background: #bcd6ff; display: flex; align-items: center; }
  .rate { padding-left: 6px; line-height: 19px; font-size: 12.7px; }

  main { height: 937px; display: flex; background: #d5daec; border-right: 3px solid #f4f6fa; }
  aside { width: 250px; height: 935px; display: flex; flex-direction: column; padding-left: 4px; box-sizing: border-box; flex: none; }
  .libhead { height: 28px; padding: 1px 12px 0 0; box-sizing: border-box; display: flex; align-items: center; justify-content: space-between; }
  .search { width: 242px; height: 35px; box-sizing: border-box; border: 1px solid #999; background: #fff; display: flex; align-items: center; color: #6d6d6d; padding-bottom: 1px; font-size: 15px; }
  .search svg:first-child { margin: 0 10px 0 11px; }
  .search span { margin-right: auto; }
  .search svg:last-child { margin-right: 5px; }
  .tree { width: 242px; height: 862px; margin-top: 9px; box-sizing: border-box; border: 1px solid #828790; background: #fff; padding: 2px 1px 3px; display: flex; flex-direction: column; overflow: hidden; }
  .node { height: 22px; display: flex; align-items: center; flex: none; overflow: hidden; font-size: 15px; }
  .node span { margin-top: -2px; }
  .root { padding-left: 8px; } .root .pc { margin: 0 5px 0 7px; }
  .vmrow { padding-left: 49px; position: relative; }
  .node .nm { padding: 0 2px; margin-left: 2px; line-height: 22px; font-size: 15.5px; }
  .sel { background: #efefef; }
  .star { position: absolute; right: 5px; top: 0; }
  .shared { padding-left: 28px; } .shared svg { margin-right: 4px; }

  .hs { display: flex; height: 19px; background: #ececec; margin-top: auto; }
  .thumb { box-sizing: border-box; border: 1px solid #989898; border-radius: 2px; background: linear-gradient(#f4f4f4, #e6e6e6 48%, #d3d3d5 50%, #dadadc); display: flex; align-items: center; justify-content: center; gap: 2px; }
  .thumb i { width: 2px; height: 9px; background: linear-gradient(90deg, #7c7c7c 50%, #fff 50%); }
  .end { margin-left: auto; }
  .side { padding-right: 1px; }
  .side .thumb { width: 170px; margin-left: 3px; }
  .wide .thumb { width: 606px; margin-left: 2px; }
  .mid .thumb { width: 475px; margin-left: 4px; }
  .mid { padding-right: 1px; }
  .hs svg:first-child { margin: 0 1px 0 -1px; }

  .work { flex: 1; display: flex; flex-direction: column; border-left: 2px solid #777; border-top: 2px solid #777; box-sizing: border-box; }
  .tabs { height: 40px; display: flex; align-items: flex-end; padding-left: 4px; }
  .tab { width: 143px; height: 34px; box-sizing: border-box; display: flex; align-items: center; background: #fff; border: 1px solid #fff; border-right-color: #8eb0cf; border-bottom: 0; border-radius: 5px 5px 0 0; padding: 0 0 1px 5px; }
  .tab b { font: 700 13.5px/20px 'Open Sans', sans-serif; margin: 0 13px 0 4px; }
  .console { height: 893px; background: #000; border-bottom: 2px solid #f4f6fa; }

  .status { height: 25px; box-sizing: border-box; border-top: 1px solid #8a8a8a; border-bottom: 1px solid #fff; background: #f0eceb; display: flex; align-items: center; justify-content: space-between; padding: 0 27px 0 1px; }
  .devs { display: flex; gap: 5px; align-items: center; }
  .devs i { width: 1px; height: 20px; background: #888; margin: 0 4px 0 2px; }

  .taskbar { height: 49px; box-sizing: border-box; border-top: 1px solid #111; border-bottom: 1px solid #000; display: flex; padding-left: 2px;
    background: linear-gradient(rgba(255, 255, 255, .5), rgba(255, 255, 255, .22) 24%, rgba(30, 30, 110, 0) 26%, rgba(30, 30, 110, 0) 50%, rgba(30, 30, 110, .1)), linear-gradient(90deg, #65407c, #7d4478 60px, #5e4480 150px, #593f77 215px, #a7bcdd 245px, #b3cbe2 500px, #a4bedf 1000px, #b4cae2 1400px, #acc4e0 1798px, #75627c 1812px, #79556f 1921px); }
  .task { width: 66px; margin-right: 4px; height: 47px; box-sizing: border-box; border: 1px solid transparent; display: flex; align-items: center; justify-content: center; flex: none; }
  .first { width: 62px; margin-right: 8px; }
  .framed { border-color: #eef5fc; border-radius: 3px; outline: 1px solid #2f3d50; background: linear-gradient(rgba(255, 255, 255, .65), rgba(255, 255, 255, .25)); }
  .dim { background: rgba(255, 255, 255, .3); }
  .active { background: linear-gradient(#fff, #d5e2f2); }
  .tray { margin-left: auto; display: flex; align-items: center; }
  .qq { margin-left: 17px; } .chat { margin-left: 11px; } .sig { margin-left: 12px; } .flag { margin-left: 12px; } .bat { margin-left: 10px; } .spk { margin-left: 10px; }
  .time { width: 101px; margin-left: 2px; color: #fff; display: flex; flex-direction: column; align-items: center; font-size: 16px; }
  .time span { line-height: 22px; margin-left: 4px; }
  .peek { width: 13px; height: 46px; border: 1px solid #e8e8ee33; border-left-color: #222; outline: 1px solid #3335; background: rgba(255, 255, 255, .15); }

  /* Floating dialog windows */
  .win { position: absolute; box-sizing: border-box; border: 1px solid #8e979f; border-radius: 7px; font: 12.5px/18px 'DejaVu Sans Condensed', 'DejaVu Sans', sans-serif; font-stretch: condensed; }
  .net { left: 609px; top: 163px; width: 702px; height: 707px; background: radial-gradient(ellipse 260px 110px at 340px 72px, #06101a 96%, transparent 100%) top / 100% 33px no-repeat, linear-gradient(90deg, #59616b 0, #3d454f 130px, #29323c 260px, #29323c 440px, #40474f 560px, #555b64) top / 100% 38px no-repeat, #0c1620; }
  .nat { left: 1279px; top: 182px; width: 590px; height: 667px; border-color: #dfe8ef; box-shadow: 0 1px 14px 4px rgba(0, 0, 0, .75); background: radial-gradient(ellipse 190px 90px at 292px 72px, #16304c 96%, transparent 100%) top / 100% 34px no-repeat, linear-gradient(90deg, #b8c8d6, #8494a3 100px, #5c6f82 200px, #3d5168 300px, #5e7183 430px, #8395a6 520px) top / 100% 36px no-repeat, linear-gradient(#8a9bad, #c3ccd4 180px, #142f4b 190px) right top / 8px 100% no-repeat, linear-gradient(90deg, #bcd3ec 20px, #142f4b 50px); }
  .bar { height: 33px; display: flex; align-items: center; }
  .net .ico { margin: 1px 0 0 8px; }
  .cap { font: 15.1px/20px 'Open Sans', 'Noto Sans CJK SC', sans-serif; }
  .net .cap { margin: -2px 0 0 7px; text-shadow: 0 0 8px #8f98a1, 0 0 10px #8f98a1, 0 0 12px #8f98a1; }
  .nat .cap { margin: -1px 0 0 7px; font-size: 15.6px; text-shadow: 0 0 8px #d5dfe8, 0 0 12px #d5dfe8; }
  .close { position: absolute; top: 0; height: 23px; display: flex; align-items: center; justify-content: center; border-radius: 0 0 5px 5px; box-sizing: border-box; border: 1px solid #a5abb1; border-top: 0; }
  .plain { left: 635px; width: 61px; background: #343c46; }
  .red { right: 5px; width: 60px; background: linear-gradient(#d78a80, #c75f52 50%, #b3301c 52%, #c65a45); }
  .win .client { position: absolute; background: #f0f0f0; box-sizing: border-box; border: 1px solid #1b232c; outline: 1px solid #8f9aa4; }
  .net .client { left: 7px; top: 33px; width: 687px; height: 666px; padding: 12px 9px 0 10px; }
  .nat .client { left: 6px; top: 34px; width: 576px; height: 626px; padding: 8px 11px 0 10px; }
  .cjk { font: 15px/18px 'Noto Sans CJK SC', sans-serif; font-weight: 300; }
  .mix { display: inline-flex; align-items: baseline; white-space: pre; }

  .row { display: flex; align-items: center; }
  .grow { flex: 1; }
  .list { height: 219px; border: 1px solid #828790; background: #fff; box-sizing: border-box; display: flex; flex-direction: column; padding: 0 1px 1px; }
  .tr { display: grid; grid-template-columns: 75px 75px 200px 125px 75px 1fr; height: 20px; align-items: center; }
  .list .td { padding-left: 5px; }
  .th { height: 25px; background: linear-gradient(#fff 50%, #f5f6f8); border-bottom: 1px solid #e0e2e8; box-sizing: border-box; align-items: stretch; }
  .th .td { border-right: 1px solid #e3e5ea; display: flex; align-items: center; }
  .picked { background: linear-gradient(90deg, #fff 4px, #f0f0f0 4px); }

  .btn { height: 26px; padding: 0 0 1px; box-sizing: border-box; border: 1px solid #707070; border-radius: 3px; box-shadow: inset 0 0 0 1px #fafafa; background: linear-gradient(#f3f3f3, #ebebeb 49%, #dddddd 51%, #cfcfcf); font: inherit; font-stretch: inherit; color: #000; display: flex; align-items: center; justify-content: center; flex: none; }
  .off { background: #f4f4f4; border-color: #a6abb0; color: #838383; }
  .w85 { width: 85px; } .w106 { width: 106px; } .w115 { width: 115px; } .w117 { width: 117px; } .w120 { width: 120px; } .w123 { width: 123px; }
  .netbtns { margin-top: 10px; height: 26px; gap: 9px; padding-left: 295px; overflow: hidden; }
  .group { border: 1px solid #d5dfe5; border-radius: 4px; box-sizing: border-box; box-shadow: inset 0 0 0 1px #fff; }
  .g1 { margin-top: 17px; height: 289px; padding-left: 12px; padding-right: 15px; }
  .legend { width: max-content; height: 18px; margin: -11px 0 1px -6px; padding: 0 3px 0 1px; background: #f0f0f0; }
  .opt { display: flex; align-items: center; gap: 3px; color: #6d6d6d; }
  .r34 { height: 34px; } .r30 { height: 30px; } .r42 { height: 42px; } .r22 { height: 22px; } .r26 { height: 26px; } .r37 { height: 37px; } .r35 { height: 35px; }
  .bridge { width: 73px; padding-left: 21px; color: #a0a0a0; text-shadow: 1px 1px 0 #fff; }
  .combo { width: 429px; height: 25px; box-sizing: border-box; border: 1px solid #a6abb0; border-radius: 3px; background: #f4f4f4; display: flex; align-items: center; justify-content: flex-end; padding-right: 5px; flex: none; }
  hr { border: 0; height: 1px; background: #9f9f9f; box-shadow: 0 1px 0 #fff; margin: 7px 0 0; }
  .h1, .h2 { margin-right: -16px; }
  .h2 { margin-top: 5px; }
  .ck1 { height: 22px; padding-top: 8px; }
  .hostname { height: 26px; padding-left: 21px; }
  .ip { width: 130px; height: 24px; box-sizing: border-box; border: 1px solid #dccfd2; border-top-color: #b3b3b3; box-shadow: inset 0 0 0 1px #fff; display: flex; align-items: center; padding: 0 8px 1px 4px; color: #6d6d6d; letter-spacing: .3px; flex: none; }
  .ip b { font-weight: 400; width: 28px; text-align: center; flex: none; }
  .l1 { width: 73px; } .l2 { width: 89px; margin-left: 30px; }
  .warn { margin-top: 16px; height: 26px; padding-left: 248px; }
  .wt { width: 278px; margin-left: 8px; }
  .admin { width: 110px; gap: 4px; justify-content: flex-start; padding-left: 6px; }
  .foot { margin-top: 10px; gap: 9px; padding-right: 2px; }

  .lab { width: 73px; } .f24 { height: 24px; } .f30 { height: 30px; } .nat .row { flex: none; }
  .g2 { margin-top: 13px; height: 167px; padding: 0 12px 0 13px; }
  .ports { height: 100px; margin-top: 8px; border: 1px solid #828790; box-sizing: border-box; display: flex; flex-direction: column; padding: 0 1px 2px; }
  .ports .tr { grid-template-columns: 75px 50px 200px 1fr; }
  .ports .td { padding-left: 6px; }
  .pbtns { gap: 9px; justify-content: flex-end; margin-top: 9px; }
  .g3 { margin-top: 17px; height: 261px; padding-left: 13px; }
  .lead { margin-top: 5px; }
  .sl { width: 171px; }
  .spin { width: 107px; height: 27px; box-sizing: border-box; border: 1px solid #dde; border-top-color: #aaa; display: flex; justify-content: space-between; }
  .spin > span { padding: 1px 0 0 3px; }
  .ud { width: 20px; display: flex; flex-direction: column; border: 1px solid #bbb; background: #eee; padding: 1px; }
  .ud i { flex: 1; border: 1px solid #c2c2c2; display: flex; align-items: center; justify-content: center; }
  .pl { width: 86px; padding-left: 21px; }
  .prefix { width: 249px; height: 28px; box-sizing: border-box; border: 1px solid #dde4ee; border-top-color: #aaa; padding: 1px 0 0 3px; }
  .setbtns { gap: 9px; margin: 17px 0 0 1px; }
  .nfoot { gap: 9px; justify-content: flex-end; margin-top: 15px; }

  .arrow { position: absolute; left: 993px; top: 405px; }
  .cursor { position: absolute; left: 524px; top: 130px; filter: drop-shadow(0 0 2px #a9a); }
  .ime { position: absolute; left: 1830px; top: 764px; width: 91px; height: 30px; box-sizing: border-box; border-top: 1px solid #888; background: linear-gradient(#9a9a9c, #3a3a3e 40%, #101014 50%, #2c2c30); display: flex; align-items: center; padding: 0 6px 0 4px; justify-content: space-between; }
  .help { width: 15px; height: 18px; border: 1px solid #e6e6f8; border-radius: 50%; background: #1226b8; color: #fff; font: 700 14px/18px 'Open Sans', sans-serif; text-align: center; margin-right: 3px; }
</style>
